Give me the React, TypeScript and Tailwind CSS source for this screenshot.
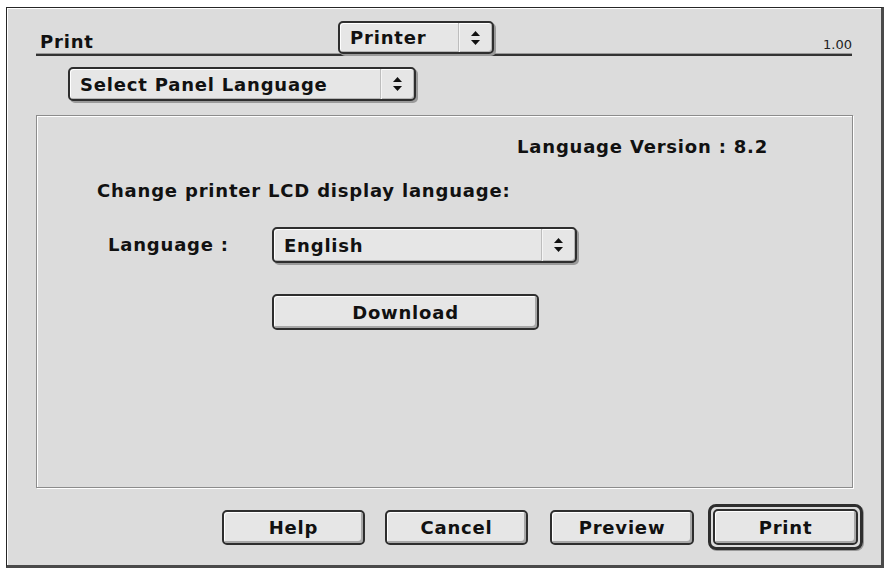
import React from "react";

const font = { fontFamily: '"DejaVu Sans", "Liberation Sans", sans-serif' };

const Arrows = () => (
  <svg width="9" height="14" viewBox="0 0 9 14" className="block">
    <path d="M4.5 0 L9 5 L0 5 Z" fill="#111" />
    <path d="M0 9 L9 9 L4.5 14 Z" fill="#111" />
  </svg>
);

type PopupProps = { label: string; className: string };

// Mac OS 9 style popup menu with arrow section on the right
const Popup = ({ label, className }: PopupProps) => (
  <div
    className={`flex items-stretch rounded-[5px] border-2 border-[#2e2e2e] bg-[#e6e6e6] shadow-[2px_2px_0_#9a9a9a,inset_1px_1px_0_#fff,inset_-1px_-1px_0_#b5b5b5] ${className}`}
  >
    <div className="flex-1 flex items-center pl-[10px] text-[18px] tracking-[0.8px] font-bold text-[#111]">
      {label}
    </div>
    <div className="w-[34px] flex items-center justify-center border-l border-[#bdbdbd] shadow-[inset_1px_0_0_#f5f5f5]">
      <Arrows />
    </div>
  </div>
);

type ButtonProps = { label: string; className: string };

const Button = ({ label, className }: ButtonProps) => (
  <div
    className={`flex items-center justify-center rounded-[5px] border-2 border-[#2e2e2e] bg-[#e6e6e6] shadow-[inset_1px_1px_0_#fff,inset_-2px_-2px_0_#a8a8a8] text-[18px] tracking-[0.8px] font-bold text-[#111] ${className}`}
  >
    {label}
  </div>
);

export default function App() {
  return (
    <div className="w-[889px] h-[568px] bg-white pt-[7px] pl-[6px]" style={font}>
      <div className="w-[878px] h-[561px] flex flex-col bg-[#dcdcdc] border border-[#262626] border-r-[3px] border-b-[3px] border-r-[#4a4a4a] border-b-[#4a4a4a] shadow-[inset_1px_1px_0_#fff]">
        {/* header */}
        <div className="mx-[29px] mt-[13px]">
          <div className="flex items-end h-[32px]">
            <div className="w-[302px] pl-[4px] pb-[2px] text-[18px] tracking-[0.8px] font-bold text-[#111] leading-none">
              Print
            </div>
            <Popup label="Printer" className="w-[156px] h-[33px] -mb-px" />
            <div className="flex-1" />
            <div className="text-[13px] text-[#222] leading-none pb-[2px]">1.00</div>
          </div>
          <div className="h-px bg-[#9a9a9a]" />
          <div className="h-[2px] bg-[#333]" />
        </div>

        <div className="ml-[61px] mt-[11px]">
          <Popup label="Select Panel Language" className="w-[348px] h-[34px]" />
        </div>

        {/* panel */}
        <div className="ml-[29px] mt-[14px] w-[817px] h-[373px] border border-[#8c8c8c] shadow-[inset_1px_1px_0_#fff,1px_1px_0_#fff] flex flex-col text-[18px] tracking-[0.8px] font-bold text-[#111]">
          <div className="flex justify-end pr-[84px] pt-[22px] leading-none">
            Language Version : 8.2
          </div>
          <div className="pl-[60px] mt-[26px] leading-none">
            Change printer LCD display language:
          </div>
          <div className="flex items-center mt-[27px]">
            <div className="w-[235px] pl-[71px] leading-none">Language :</div>
            <Popup label="English" className="w-[305px] h-[36px]" />
          </div>
          <div className="pl-[235px] mt-[31px]">
            <Button label="Download" className="w-[267px] h-[36px]" />
          </div>
        </div>

        {/* bottom buttons */}
        <div className="flex items-center ml-[215px] mt-[16px]">
          <Button label="Help" className="w-[143px] h-[35px]" />
          <Button label="Cancel" className="w-[143px] h-[35px] ml-[20px]" />
          <Button label="Preview" className="w-[144px] h-[35px] ml-[22px]" />
          <div className="ml-[14px] w-[155px] h-[46px] rounded-[8px] border-[3px] border-[#2e2e2e] p-[2px] shadow-[1px_1px_0_#999]">
            <Button label="Print" className="w-full h-full" />
          </div>
        </div>
      </div>
    </div>
  );
}
